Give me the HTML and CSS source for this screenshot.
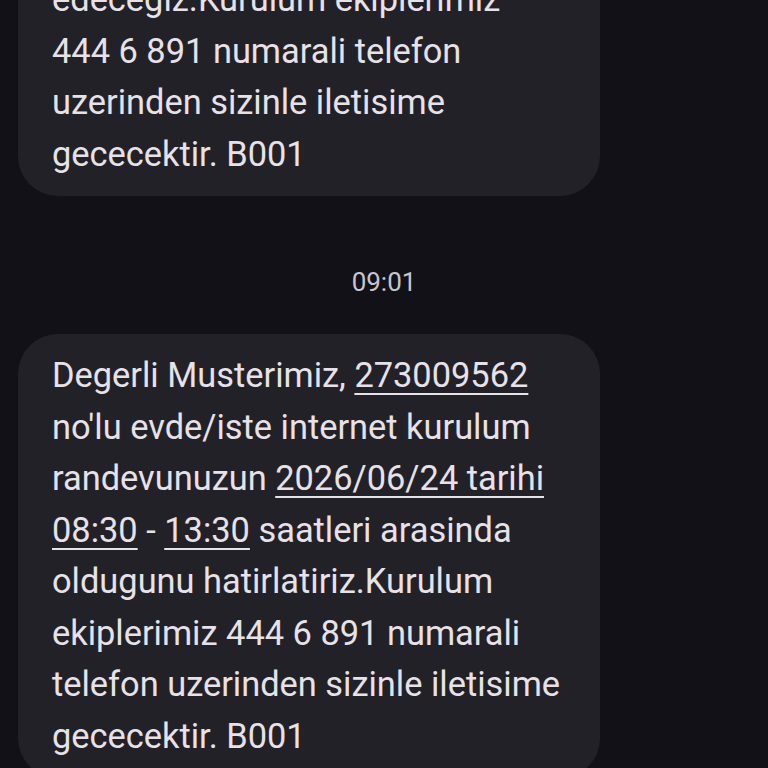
FILE: index.html
```html
<!DOCTYPE html>
<html lang="tr">
<head>
    <meta charset="UTF-8">
    <meta name="viewport" content="width=device-width, initial-scale=1.0">
    <title>Mesajlar</title>
    <link rel="stylesheet" href="styles.css">
</head>
<body>
    <div class="screen">
        <div class="thread">
            <div class="bubble first">
                edecegiz.Kurulum ekiplerimiz<br>
                444 6 891 numarali telefon<br>
                uzerinden sizinle iletisime<br>
                gececektir. B001
            </div>

            <div class="stamp">09:01</div>

            <div class="bubble">
                Degerli Musterimiz, <span class="link">273009562</span><br>
                no'lu evde/iste internet kurulum<br>
                randevunuzun <span class="link">2026/06/24 tarihi</span><br>
                <span class="link">08:30</span> - <span class="link">13:30</span> saatleri arasinda<br>
                oldugunu hatirlatiriz.Kurulum<br>
                ekiplerimiz 444 6 891 numarali<br>
                telefon uzerinden sizinle iletisime<br>
                gececektir. B001
            </div>
        </div>
    </div>
</body>
</html>
```

FILE: styles.css
```css
body {
    margin: 0;
    background-color: #131118;
    font-family: Roboto, "Noto Sans", sans-serif;
}

.screen {
    height: 768px;
    overflow: hidden;
}

.thread {
    display: flex;
    flex-direction: column;
    align-items: flex-start;
    padding: 0 0 0 18px;
    margin-top: -42px;
}

.bubble {
    box-sizing: border-box;
    width: 582px;
    padding: 16px 20px 16px 34px;
    background-color: #232128;
    border-radius: 40px;
    color: #e7e2e8;
    font-size: 34.4px;
    line-height: 51.5px;
    white-space: nowrap;
}

.link {
    text-decoration: underline;
    text-decoration-thickness: 2px;
    text-underline-offset: 6px;
}

.stamp {
    align-self: center;
    margin: 71px 18px 37px 0;
    color: #c9c5cc;
    font-size: 26px;
    line-height: 30px;
}
```
